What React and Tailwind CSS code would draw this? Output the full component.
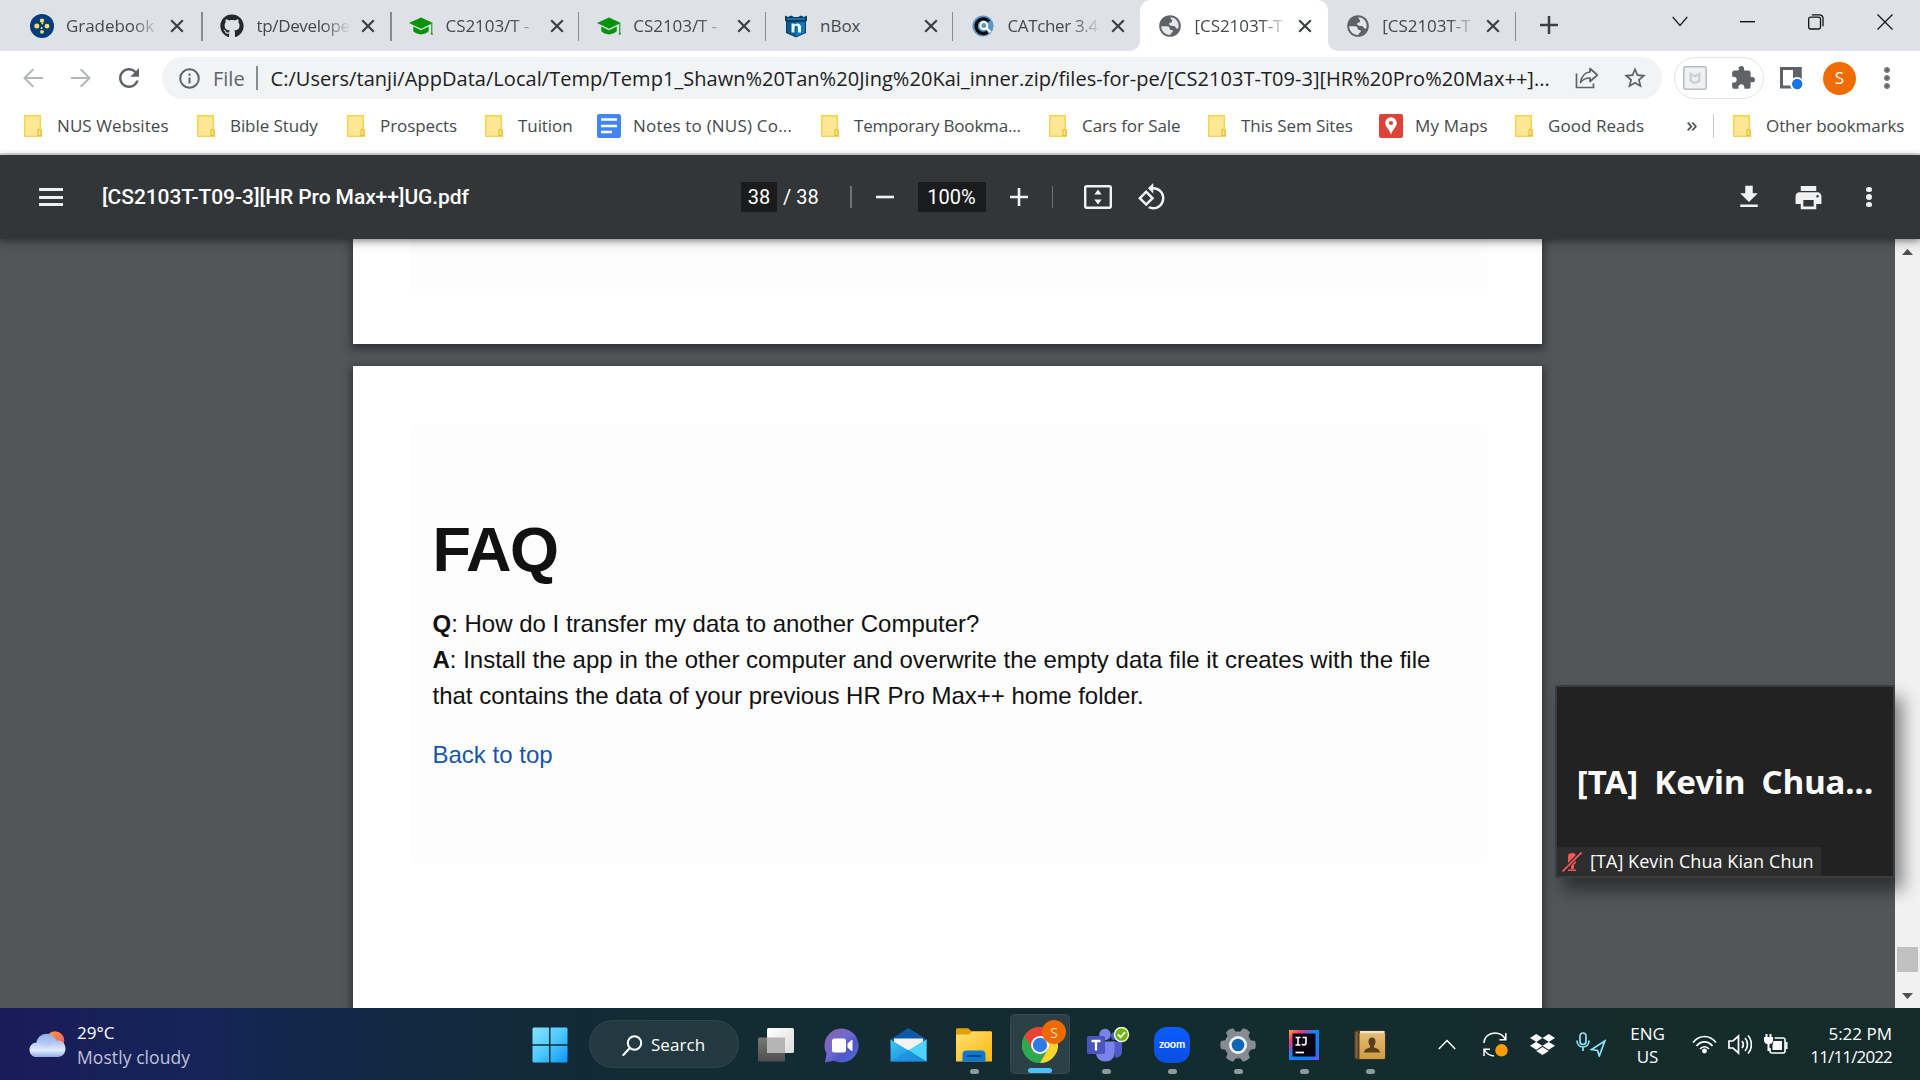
import React from "react";
import { FaGithub, FaDropbox } from "react-icons/fa";
import { MdExtension, MdStarBorder, MdRefresh, MdPrint } from "react-icons/md";

const UI = "font-['Open_Sans','Noto_Sans',sans-serif]";

/* ---------- tab icons ---------- */

const CanvasIcon = () => (
  <svg width="24" height="24" viewBox="0 0 24 24">
    <circle cx="12" cy="12" r="12" fill="#003d7c" />
    <g fill="#ffdc5e">
      <circle cx="12" cy="6.6" r="2.2" />
      <circle cx="12" cy="17.8" r="1.9" />
      <circle cx="6.8" cy="12" r="2.5" />
      <circle cx="17" cy="12.2" r="2.4" />
      <circle cx="12.4" cy="9.6" r="1" />
      <circle cx="11.6" cy="14" r="1" />
    </g>
  </svg>
);

const CapIcon = () => (
  <svg width="24" height="24" viewBox="0 0 24 24" fill="#079307">
    <path d="M12 3.5 0 9l12 5.7L24 9z" />
    <path d="M4.3 12.6v4.6c1.800 1.700 5 2.900 7.700 3.300 2.700-.4 5.900-1.600 7.700-3.300v-4.600L12 16.300z" />
    <path d="M22.300 9.500h1v8.700l.7 2.300h-2.500l.8-2.300z" />
  </svg>
);

const NBoxIcon = () => (
  <svg width="24" height="24" viewBox="0 0 24 24">
    <path d="M1 1.500 4 3l3-1.500L10 3h4l3-1.500L20 3l3-1.500v5l-1 1V19l-10 4.500L2 19V7.500l-1-1z" fill="#0b3c66" />
    <path d="M3 8h18v10.500L12 22.500 3 18.500z" fill="#0a5a92" />
    <path d="M12 8h9v10.500L12 22.500z" fill="#1079b8" />
    <path d="M7.500 18.500V9.500h3v1c2.500-2 6.500-1 6.500 2.500v5.500h-3v-5c0-2.200-3.500-2.200-3.500 0v5z" fill="#e8f6ff" />
    <path d="M3 4.200h18v1.600H3z" fill="#1b82b4" />
  </svg>
);

const CatcherIcon = () => (
  <svg width="24" height="24" viewBox="0 0 24 24" fill="none">
    <circle cx="12" cy="12" r="10.600" fill="#5b97c2" />
    <path d="M16.500 18.200A7.300 7.300 0 1 1 18 7.500" stroke="#0b0b0b" strokeWidth="3.400" />
    <circle cx="12.800" cy="11.500" r="3.500" fill="#5b97c2" stroke="#fff" strokeWidth="2" />
    <path d="m15.500 14 4 4.200" stroke="#fff" strokeWidth="2.200" />
  </svg>
);

const GlobeIcon = () => (
  <svg width="22" height="22" viewBox="0 0 22 22">
    <circle cx="11" cy="11" r="10.800" fill="#5f6368" />
    <g fill="#e4e6ea">
      <path d="M11.500 2.300c3.700.2 6.800 2.700 7.800 6 .5 2 .4 3.600 0 5-1 .8-2.300.5-2.700-.7-.3-1-.8-1.600-2-1.600-1.600 0-3.600-.3-4.300-1.500-.6-1.200.3-2 1.600-2.100 1-.1 1.300-.7 1.200-1.700-.2-1.200-1.700-1.600-1.600-3.400z" />
      <path d="M2.200 11.300H8c1.700 0 2.500.9 2.700 2.200.1 1.200.8 1.500 2 1.600 1.200.2 1.400 1 .9 1.900-.6 1-1.900 1-2.300 2.900-5 .2-9-3.600-9.100-8.600z" />
    </g>
  </svg>
);

const Cross = ({ className = "" }) => (
  <svg className={className} width="14" height="14" viewBox="0 0 14 14" stroke="#3c4043" strokeWidth="2.200">
    <path d="m1.200 1.200 11.600 11.600M12.800 1.200 1.200 12.800" />
  </svg>
);

const tabs = [
  { icon: <CanvasIcon />, title: "Gradebook", fade: true, w: "w-[190.500px]" },
  { icon: <FaGithub size={24} color="#24292f" />, title: "tp/Develope", fade: true, w: "w-[189px]", tight: true },
  { icon: <CapIcon />, title: "CS2103/T -", fade: true, w: "w-[187.800px]" },
  { icon: <CapIcon />, title: "CS2103/T -", fade: true, w: "w-[186.800px]" },
  { icon: <NBoxIcon />, title: "nBox", w: "w-[187.300px]" },
  { icon: <CatcherIcon />, title: "CATcher 3.4", fade: true, w: "w-[187.100px]", tight: true },
  { icon: <GlobeIcon />, title: "[CS2103T-T", fade: true, active: true, w: "w-[187.800px]" },
  { icon: <GlobeIcon />, title: "[CS2103T-T", fade: true, w: "w-[187.800px]" },
];

function Tab({ icon, title, fade, active, w, bare, tight }) {
  return (
    <div className={`relative flex h-[51px] shrink-0 items-center pl-[17px] ${w} ${active ? "z-10 rounded-t-[11px] bg-white" : ""}`}>
      {active && (
        <>
          <svg className="absolute bottom-0 -left-[10px]" width="10" height="10"><path d="M10 0v10H0A10 10 0 0 0 10 0" fill="#fff" /></svg>
          <svg className="absolute -right-[10px] bottom-0" width="10" height="10"><path d="M0 0v10h10A10 10 0 0 1 0 0" fill="#fff" /></svg>
        </>
      )}
      <span className="flex h-6 w-[25px] items-center justify-center">{icon}</span>
      <span
        className={`ml-3 w-[92px] overflow-hidden text-[17px] leading-6 whitespace-nowrap text-[#45494d] ${tight ? "tracking-[-0.350px]" : "tracking-[-0.050px]"} ${
          fade ? "[mask-image:linear-gradient(to_right,#000_72%,transparent_102%)]" : ""
        }`}
      >
        {title}
      </span>
      <Cross className="ml-[12px]" />
      {!active && !bare && <span className="absolute top-3 right-0 h-[29px] w-[1.500px] bg-[#888c91]" />}
    </div>
  );
}

function TabStrip() {
  return (
    <div className="flex h-[51px] bg-[#dee1e6] pl-3">
      {tabs.map((t, i) => (
        <Tab key={i} {...t} bare={i === 5} />
      ))}
      <svg className="mt-4 ml-6" width="18" height="18" viewBox="0 0 18 18" stroke="#3c4043" strokeWidth="2.500">
        <path d="M9 0v18M0 9h18" />
      </svg>
      <svg className="mt-4 ml-auto" width="16" height="11" viewBox="0 0 16 11" fill="none" stroke="#222" strokeWidth="1.300">
        <path d="m.7 1 7.300 8.500L15.300 1" />
      </svg>
      <svg className="mt-[21px] ml-[52px]" width="15" height="2"><path d="M0 .7h15" stroke="#111" strokeWidth="1.400" /></svg>
      <svg className="mt-[14px] ml-[53px]" width="16" height="16" viewBox="0 0 16 16" fill="none" stroke="#111" strokeWidth="1.300">
        <rect x=".7" y="3.200" width="11.800" height="11.800" rx="1.800" />
        <path d="M3.800.8h7.700a3.500 3.500 0 0 1 3.500 3.500v8" />
      </svg>
      <svg className="mt-[14px] mr-[27px] ml-[53px]" width="16" height="16" viewBox="0 0 16 16" stroke="#111" strokeWidth="1.200">
        <path d="m.5.5 15 15M15.500.5l-15 15" />
      </svg>
    </div>
  );
}

/* ---------- address bar ---------- */

const Arrow = ({ className }) => (
  <svg className={className} width="20" height="20" viewBox="0 0 20 20" fill="none" stroke="#b4b7ba" strokeWidth="2">
    <path d="M20 10H1.500M10.300 1.200 1.500 10l8.800 8.800" />
  </svg>
);

function AddressBar() {
  return (
    <div className="flex h-[54px] items-center bg-white pl-[23px]">
      <Arrow className="" />
      <Arrow className="ml-7 rotate-180" />
      <MdRefresh size={30} color="#5f6368" className="ml-[23px]" />
      <div className="ml-[18px] flex h-[42px] w-[1500px] items-center rounded-full bg-[#f1f3f4] pl-[17px]">
        <svg width="21" height="21" viewBox="0 0 21 21" fill="none" stroke="#5f6368" strokeWidth="2">
          <circle cx="10.500" cy="10.500" r="9.300" />
          <path d="M10.500 9.500v6M10.500 5.400v2.300" />
        </svg>
        <span className="ml-[13px] w-[43px] pt-px text-[20px] text-[#5f6368]">File</span>
        <span className="h-6 w-[1.500px] bg-[#888c91]" />
        <span className="ml-[13px] flex-1 pt-px text-[20px] tracking-[0.045px] whitespace-nowrap text-[#202124]">
          C:/Users/tanji/AppData/Local/Temp/Temp1_Shawn%20Tan%20Jing%20Kai_inner.zip/files-for-pe/[CS2103T-T09-3][HR%20Pro%20Max++]...
        </span>
        <svg className="mr-[23px]" width="24" height="22" viewBox="0 0 24 22" fill="none" stroke="#5f6368" strokeWidth="1.700">
          <path d="M1.500 6.500v14h17v-4" />
          <path d="M15 1.500 22.300 8 15 14.500V11c-4 0-7 1-9.500 4.500C6.500 9.500 9.500 5.500 15 5z" strokeLinejoin="round" />
        </svg>
        <MdStarBorder size={26} color="#5f6368" className="mr-[14px]" />
      </div>
      <div className="ml-3 flex h-[42px] w-[90px] items-center rounded-full border-[1.500px] border-[#e1e3e6] pl-[8px]">
        <svg width="24" height="24" viewBox="0 0 24 24" fill="none">
          <rect x=".8" y=".8" width="22.400" height="22.400" rx="2" fill="#f0f1f3" stroke="#b7bcc1" strokeWidth="1.500" />
          <path d="m6.500 6 5.500 3 5.500-3v9.500L12 18.500l-5.500-3z" fill="#cdd1d5" />
          <path d="m9 10 3 1.700L15 10v4l-3 1.700L9 14z" fill="#f0f1f3" />
        </svg>
        <MdExtension size={26} color="#5f6368" className="ml-[23px]" />
      </div>
      <svg className="ml-4" width="23" height="23" viewBox="0 0 23 23">
        <path d="M1.500 1.500h18.800v18.500H1.500z" fill="none" stroke="#5f6368" strokeWidth="3" />
        <path d="M13 1h8v12h-8z" fill="#5f6368" />
        <circle cx="17" cy="17" r="7" fill="#fff" />
        <circle cx="17.200" cy="17" r="5.200" fill="#1a73e8" />
      </svg>
      <span className="ml-5 flex h-[33px] w-[33px] items-center justify-center rounded-full bg-[#ef6c00] text-[17px] text-white">S</span>
      <div className="ml-[29px] flex flex-col gap-1">
        {[0, 1, 2].map((i) => (
          <span key={i} className="h-1 w-1 rounded-full bg-[#5f6368] outline-[0.500px] outline-[#5f6368]" />
        ))}
      </div>
    </div>
  );
}

/* ---------- bookmarks ---------- */

const Folder = () => (
  <svg width="18" height="22" viewBox="0 0 18 22">
    <path d="M.7.7h15.600v14l1 .5v6.100H.7z" fill="#ffe793" stroke="#f8d351" strokeWidth="1.400" />
    <path d="M14 20.500v-4.600a1.500 1.500 0 0 1 3 0v4.600z" fill="#ffe793" stroke="#e9bd33" strokeWidth="1.200" />
  </svg>
);
const Docs = () => (
  <svg width="24" height="24" viewBox="0 0 24 24">
    <rect width="24" height="24" rx="2.500" fill="#4285f4" />
    <path d="M4 5.500h16M4 12h16M4 18h11" stroke="#fff" strokeWidth="2.600" />
  </svg>
);
const Maps = () => (
  <svg width="24" height="24" viewBox="0 0 24 24">
    <rect width="24" height="24" rx="2" fill="#db4437" />
    <path d="M12 3.300a5.800 5.800 0 0 0-5.800 5.800c0 4.200 4.800 6.500 5.800 12 1-5.500 5.800-7.800 5.800-12A5.800 5.800 0 0 0 12 3.300z" fill="#fff" />
    <circle cx="12" cy="9" r="2.100" fill="#db4437" />
  </svg>
);

const bookmarks = [
  { label: "NUS Websites", w: "w-[173px]", track: "tracking-[0.080px]" },
  { label: "Bible Study", w: "w-[150px]" },
  { label: "Prospects", w: "w-[138px]" },
  { label: "Tuition", w: "w-[112px]" },
  { label: "Notes to (NUS) Co...", w: "w-[224px]", icon: <Docs />, track: "tracking-[0.200px]" },
  { label: "Temporary Bookma...", w: "w-[228px]", track: "tracking-[-0.200px]" },
  { label: "Cars for Sale", w: "w-[159px]" },
  { label: "This Sem Sites", w: "w-[171px]" },
  { label: "My Maps", w: "w-[136px]", icon: <Maps />, track: "tracking-[0.200px]" },
  { label: "Good Reads", w: "w-[172px]", track: "tracking-[0.050px]" },
];

const Bookmark = ({ label, icon, w = "", track = "tracking-[-0.080px]" }) => (
  <div className={`flex shrink-0 items-center text-[17px] whitespace-nowrap text-[#45494d] ${w} ${track} ${icon ? "gap-3" : "gap-[15px]"}`}>
    {icon || <Folder />}
    <span>{label}</span>
  </div>
);

function BookmarksBar() {
  return (
    <div className="flex h-[50px] items-center border-b-2 border-[#dadce0] bg-white pb-[6px] pl-6">
      {bookmarks.map((b) => (
        <Bookmark key={b.label} {...b} />
      ))}
      <svg width="10" height="9" viewBox="0 0 10 9" fill="none" stroke="#4a4e52" strokeWidth="1.700">
        <path d="m.7.700 3.600 3.800L.7 8.300M5.300.7l3.600 3.800-3.600 3.800" />
      </svg>
      <span className="mr-[19px] ml-[16px] h-6 w-px bg-[#c6c9cd]" />
      <Bookmark label="Other bookmarks" />
    </div>
  );
}

/* ---------- PDF viewer ---------- */

const Divider = ({ className }) => <span className={`h-[22px] w-[1.500px] bg-[#6f7275] ${className}`} />;

function PdfToolbar() {
  return (
    <div className="relative z-10 flex h-[84px] items-center bg-[#323639] pl-[39px] font-[Roboto,sans-serif] text-[#f1f1f1] shadow-[0_2px_6px_rgba(0,0,0,0.35),0_3px_12px_rgba(0,0,0,0.18)]">
      <div className="flex flex-col gap-[4.500px]">
        <span className="h-[3px] w-6 bg-[#f1f1f1]" />
        <span className="h-[3px] w-6 bg-[#f1f1f1]" />
        <span className="h-[3px] w-6 bg-[#f1f1f1]" />
      </div>
      <span className="ml-[39px] w-[639px] pt-px text-[21px] font-medium tracking-[-0.080px] text-white">[CS2103T-T09-3][HR Pro Max++]UG.pdf</span>
      <span className="flex h-[30px] w-9 items-center justify-center bg-[#191b1c] text-[20px] text-white">38</span>
      <span className="ml-[6px] w-[67px] text-[20px] whitespace-pre text-white">{"/ 38"}</span>
      <Divider className="" />
      <svg className="ml-6" width="18" height="18"><path d="M0 9h18" stroke="#f1f1f1" strokeWidth="2.600" /></svg>
      <span className="ml-6 flex h-[30px] w-[68px] items-center justify-center bg-[#191b1c] text-[20px] text-white">100%</span>
      <svg className="ml-6" width="18" height="18"><path d="M0 9h18M9 0v18" stroke="#f1f1f1" strokeWidth="2.600" /></svg>
      <Divider className="ml-6" />
      <svg className="ml-[31px]" width="28" height="24" viewBox="0 0 28 24">
        <rect x="1.200" y="1.200" width="25.600" height="21.600" rx="1.500" fill="none" stroke="#f1f1f1" strokeWidth="2.400" />
        <path d="m14 4.500 3.700 5H10.300zM14 19.500l3.700-5H10.300z" fill="#f1f1f1" />
      </svg>
      <svg className="ml-[25px]" width="30" height="30" viewBox="0 0 24 24" fill="#f1f1f1">
        <path d="M7.340 6.410.860 12.900l6.490 6.480 6.490-6.480-6.500-6.490zM3.690 12.900l3.660-3.660L11 12.900l-3.660 3.660-3.650-3.660zm15.670-6.260C17.610 4.880 15.300 4 13 4V.760L8.760 5 13 9.240V6c1.790 0 3.580.680 4.950 2.050 2.730 2.730 2.730 7.170 0 9.900C16.580 19.320 14.790 20 13 20c-.970 0-1.940-.210-2.840-.610l-1.490 1.490C10.020 21.620 11.510 22 13 22c2.300 0 4.610-.880 6.360-2.640 3.520-3.510 3.520-9.210 0-12.720z" />
      </svg>
      <svg className="ml-auto" width="30" height="30" viewBox="0 0 24 24" fill="#f1f1f1">
        <path d="M19 9h-4V3H9v6H5l7 7 7-7zM5 18v2h14v-2H5z" />
      </svg>
      <MdPrint size={31} className="ml-[29px]" />
      <div className="mr-[48.500px] ml-[42px] flex flex-col gap-[2px]">
        {[0, 1, 2].map((i) => (
          <span key={i} className="h-[5.500px] w-[5.500px] rounded-full bg-[#f1f1f1]" />
        ))}
      </div>
    </div>
  );
}

function Document() {
  return (
    <div className="flex flex-1 flex-col items-center gap-[22px] overflow-hidden bg-[#525659]">
      <div className="h-[105px] w-[1189px] shrink-0 bg-white pr-[55px] pl-[57px] shadow-[0_3px_8px_2px_rgba(20,20,25,0.55)]">
        <div className="h-[50px] bg-[#fdfdfd]" />
      </div>
      <div className="h-[700px] w-[1189px] shrink-0 bg-white pt-[59px] pr-[55px] pl-[57px] shadow-[0_3px_8px_2px_rgba(20,20,25,0.55)]">
        <div className="h-[438px] bg-[#fdfdfd] pt-[87px] pl-[22.500px] font-['Liberation_Sans',Arial,sans-serif] text-[24px] leading-9 text-[#111]">
          <h1 className="text-[63px] leading-[74px] font-bold tracking-[-1.500px]">FAQ</h1>
          <p className="mt-[20px] whitespace-nowrap">
            <b>Q</b>: How do I transfer my data to another Computer?
            <br />
            <b>A</b>: Install the app in the other computer and overwrite the empty data file it creates with the file
            <br />
            that contains the data of your previous HR Pro Max++ home folder.
          </p>
          <p className="mt-[23px] text-[#1756a9]">Back to top</p>
        </div>
      </div>
    </div>
  );
}

function Scrollbar() {
  return (
    <div className="flex w-[25px] flex-col items-center bg-[#f1f1f1] pt-[10px] pb-[9px]">
      <svg width="11" height="6"><path d="m5.500 0 5.500 6H0z" fill="#505050" /></svg>
      <span className="mt-auto mb-[21px] h-[25px] w-[21px] bg-[#c1c1c1]" />
      <svg width="11" height="6"><path d="M5.500 6 0 0h11z" fill="#505050" /></svg>
    </div>
  );
}

function CallWindow() {
  return (
    <div className="absolute top-[685px] left-[1555px] z-20 flex h-[193px] w-[340px] flex-col border-2 border-[#3a3e41] bg-[#222] shadow-[8px_12px_16px_rgba(0,0,0,0.45)]">
      <div className="flex flex-1 items-end justify-center pb-[43px] font-['Noto_Sans',sans-serif] text-[33px] leading-[44px] font-bold whitespace-nowrap text-[#fafafa] [word-spacing:7.500px]">
        [TA] Kevin Chua...
      </div>
      <div className="flex h-[29px] w-[264px] items-center bg-[#2d2d2d] pl-[5px]">
        <svg width="20" height="20" viewBox="0 0 20 20" fill="none">
          <rect x="6" y="1" width="8" height="12" rx="3.800" fill="#fb5656" />
          <path d="M9 13h3v4H9zM6 17.500h8V19H6z" fill="#fb5656" />
          <path d="M3 16.800 17.800 2" stroke="#2d2d2d" strokeWidth="4" />
          <path d="M.5 19.500 19.500.5" stroke="#fb5656" strokeWidth="1.800" />
        </svg>
        <span className="ml-[8px] text-[18px] tracking-[0.070px] whitespace-nowrap text-white">[TA] Kevin Chua Kian Chun</span>
      </div>
    </div>
  );
}

/* ---------- taskbar ---------- */

const WeatherIcon = () => (
  <svg width="37" height="26" viewBox="0 0 37 26">
    <defs>
      <linearGradient id="sun" x1="0" y1="0" x2="1" y2="1"><stop stopColor="#ff9f3a" /><stop offset="1" stopColor="#ff4f6e" /></linearGradient>
      <linearGradient id="cloudA" x1="0" y1="0" x2="0" y2="1"><stop stopColor="#8fb0f0" /><stop offset="1" stopColor="#dbe6fb" /></linearGradient>
      <linearGradient id="cloudB" x1="0" y1="0" x2="0" y2="1"><stop stopColor="#a9c1ee" /><stop offset=".6" stopColor="#e2ebfc" /><stop offset="1" stopColor="#8cabea" /></linearGradient>
    </defs>
    <circle cx="26" cy="9.500" r="9.300" fill="url(#sun)" />
    <circle cx="17.500" cy="13" r="10.300" fill="url(#cloudA)" />
    <path d="M7.500 11.500c3 0 5 1.400 6.500 3.500 1.500 1 3.500 1 7 .5 1-4 4-6 8-6 4.500 0 7.500 3.600 7.500 8 0 5-3.500 8.500-8 8.500h-21C3 26 .5 22.500.5 18.700s3-7.200 7-7.200z" fill="url(#cloudB)" />
  </svg>
);

const WindowsIcon = () => (
  <svg width="36" height="36" viewBox="0 0 36 36">
    <defs><linearGradient id="win" gradientUnits="userSpaceOnUse" x1="0" y1="0" x2="36" y2="36"><stop stopColor="#8be2ff" /><stop offset=".5" stopColor="#4ccaff" /><stop offset="1" stopColor="#0b93fb" /></linearGradient></defs>
    <path d="M1.500.5H17v16.700H.5V1.500zM18.500.5h16l1 1v15.700h-17zM.5 18.800H17v16.700H1.500l-1-1zM18.500 18.800h17v15.700l-1 1h-16z" fill="url(#win)" />
  </svg>
);

const TaskViewIcon = () => (
  <svg width="36" height="34" viewBox="0 0 36 34">
    <defs>
      <linearGradient id="tvA" x1="0" y1="0" x2="1" y2="1"><stop stopColor="#fff" /><stop offset="1" stopColor="#dcdcdc" /></linearGradient>
      <linearGradient id="tvB" x1="0" y1="0" x2="0" y2="1"><stop stopColor="#777" /><stop offset="1" stopColor="#4e4e4e" /></linearGradient>
    </defs>
    <rect y="9.500" width="27" height="24" rx="1.500" fill="url(#tvB)" />
    <rect x="9" width="27" height="25" rx="1.500" fill="url(#tvA)" />
    <path d="M9 9.500h18V25H10.500L9 23.500z" fill="#b5b5b5" />
  </svg>
);

const ChatIcon = () => (
  <svg className="mr-[2px]" width="35" height="35" viewBox="0 0 35 35">
    <defs><linearGradient id="chat" x1="0" y1="0" x2="1" y2="1"><stop stopColor="#8e62a8" /><stop offset=".45" stopColor="#6f6ad0" /><stop offset=".65" stopColor="#5157c9" /><stop offset="1" stopColor="#4a6bdc" /></linearGradient></defs>
    <path d="M17.500.5a17 17 0 1 1-7.300 32.300L1 34.500l1.600-8.800A17 17 0 0 1 17.500.5z" fill="url(#chat)" />
    <rect x="8" y="10.500" width="14" height="14" rx="2.500" fill="#fff" />
    <path d="m23.500 15.500 4-3.500c.5-.3 1 0 1 .5v10c0 .5-.5.800-1 .5l-4-3.500z" fill="#fff" />
  </svg>
);

const MailIcon = () => (
  <svg width="37" height="34" viewBox="0 0 37 34">
    <defs><linearGradient id="mail" x1="0" y1="0" x2="1" y2="1"><stop stopColor="#3cc6f7" /><stop offset="1" stopColor="#1580d8" /></linearGradient></defs>
    <path d="M.5 11.500 18.500 0l18 11.500v5H.5z" fill="#0c5ba8" />
    <path d="M4 10.500h29V22H4z" fill="#f3f3f3" />
    <path d="M.5 11.500v22h36v-22l-18 11z" fill="url(#mail)" />
    <path d="M18.500 22.500 36.500 11.500v22z" fill="#4fd2fb" />
    <path d="M.5 33.500h36L18.500 22z" fill="#1c8ee0" opacity=".6" />
  </svg>
);

const ExplorerIcon = () => (
  <svg width="36" height="34" viewBox="0 0 36 34">
    <defs><linearGradient id="fold" x1="0" y1="0" x2="1" y2="1"><stop stopColor="#ffdf76" /><stop offset="1" stopColor="#fdb90c" /></linearGradient></defs>
    <path d="M0 2C0 .8.600.2 1.500.2H12l3.500 3H34.500c1 0 1.500.6 1.500 1.500V12H0z" fill="#e2a107" />
    <path d="M0 6.500h13l3-3h18.500c1 0 1.500.6 1.500 1.500v28.500H0z" fill="url(#fold)" />
    <path d="M6.500 33.500v-7a4 4 0 0 1 4-4h15a4 4 0 0 1 4 4v7z" fill="#0d78d2" />
    <path d="M11 28h14" stroke="#083f73" strokeWidth="1.700" />
  </svg>
);

const ChromeIcon = () => (
  <svg width="36" height="36" viewBox="0 0 36 36">
    <circle cx="18" cy="18" r="18" fill="#2da94f" />
    <path d="M2.400 9A18 18 0 0 1 33.600 9H18z" fill="#ea4335" />
    <path d="M2.400 9 10.200 22.500 18 18V9z" fill="#ea4335" />
    <path d="M33.600 9A18 18 0 0 1 18 36l7.800-13.500L18 9z" fill="#fdd32f" />
    <path d="M2.400 9 10.200 22.500 18 36A18 18 0 0 1 2.400 9z" fill="#2da94f" />
    <circle cx="18" cy="18" r="9" fill="#fff" />
    <circle cx="18" cy="18" r="7.200" fill="#3079ea" />
  </svg>
);

const TeamsIcon = () => (
  <svg className="ml-[4px] shrink-0" width="44" height="36" viewBox="0 0 44 36">
    <circle cx="29" cy="9" r="4" fill="#5059c9" />
    <circle cx="19" cy="7.500" r="5.700" fill="#7b83eb" />
    <path d="M26 14.500h10v10c0 4-3 6.500-7 6z" fill="#5059c9" />
    <path d="M10 14.500h18.500v11c0 6-4 9-9 9s-9.500-3-9.500-9z" fill="#7b83eb" />
    <rect x="1" y="9" width="18" height="18" rx="1.500" fill="#4b53bc" />
    <path d="M5.500 14h9M10 14v9.500" stroke="#fff" strokeWidth="2.300" />
    <circle cx="35.500" cy="7.500" r="7.700" fill="#fff" />
    <circle cx="35.500" cy="7.500" r="6.300" fill="#6bb700" />
    <path d="m32 7.500 2.600 2.700 4.600-5" fill="none" stroke="#fff" strokeWidth="1.900" />
  </svg>
);

const ZoomIcon = () => (
  <div className="flex h-9 w-9 items-center justify-center rounded-[13px] bg-gradient-to-b from-[#0b5cff] to-[#0a4fe0] pb-px font-[Lato,sans-serif] text-[11px] font-bold tracking-[-0.200px] text-white">
    zoom
  </div>
);

const GearIcon = () => (
  <svg width="36" height="36" viewBox="-18 -18 36 36">
    <defs><linearGradient id="gear" x1="0" y1="0" x2="1" y2="1"><stop stopColor="#9aa0a6" /><stop offset="1" stopColor="#6d7277" /></linearGradient></defs>
    <circle r="13.500" fill="url(#gear)" />
    {[30, 90, 150, 210, 270, 330].map((a) => (
      <path key={a} d="M-5-11-4-17Q0-18.500 4-17L5-11 5-9H-5z" fill="#868c92" transform={`rotate(${a})`} />
    ))}
    <circle r="11" fill="#868c92" />
    <circle r="9" fill="#f2f2f2" />
    <circle r="6.300" fill="#0f66b5" />
  </svg>
);

const IdeaIcon = () => (
  <svg width="30" height="30" viewBox="0 0 30 30">
    <defs><linearGradient id="idea" x1="0" y1="0" x2="1" y2="1"><stop stopColor="#fda53b" /><stop offset=".22" stopColor="#f2317c" /><stop offset=".45" stopColor="#1486ff" /><stop offset=".8" stopColor="#147bfa" /><stop offset="1" stopColor="#8a4bff" /></linearGradient></defs>
    <path d="M0 0h30v30H0z" fill="url(#idea)" />
    <path d="M3.500 3.500h23v23h-23z" fill="#0a0310" />
    <path d="M6.500 7.500h5M6.500 15h5M9 7.500V15M13.500 7.500H17v5.300c0 1.500-.8 2.200-2 2.200-.9 0-1.500-.3-2-1" fill="none" stroke="#fff" strokeWidth="1.600" />
    <path d="M6.500 22.500H15" stroke="#fff" strokeWidth="1.700" />
  </svg>
);

const AddressBookIcon = () => (
  <svg width="32" height="30" viewBox="0 0 32 30">
    <defs><linearGradient id="book" x1="0" y1="0" x2="0" y2="1"><stop stopColor="#e3bb74" /><stop offset="1" stopColor="#cf9b43" /></linearGradient></defs>
    <rect x=".5" y=".5" width="31" height="29" rx="2" fill="#5a4122" />
    <path d="M6 1h24.500v3H6z" fill="#efe4cf" />
    <path d="M5.500 3.200h25.500V28a1 1 0 0 1-1 1H5.500z" fill="url(#book)" />
    <path d="M2.500 2v26" stroke="#83683f" strokeWidth="2" />
    <path d="M18 7.500c2.300 0 3.500 1.700 3.500 4s-.9 3.500-1.500 4.300v1.700c2.500 1 5.500 1.300 6 5H10c.5-3.700 3.500-4 6-5v-1.700c-.6-.8-1.500-2-1.500-4.300s1.200-4 3.500-4z" fill="#5a3f18" />
  </svg>
);

const TaskItem = ({ children, running, active }) => (
  <div className={`relative mx-[3px] flex h-[60px] w-[60px] shrink-0 items-center justify-center rounded-[5px] pt-[2px] ${active ? "bg-white/10 ring-1 ring-white/5 ring-inset" : ""}`}>
    {children}
    {running && <span className="absolute bottom-0 left-[25.500px] h-[5px] w-[9px] rounded-full bg-[#8f9b9b]" />}
    {active && <span className="absolute bottom-px left-[18px] h-[5px] w-6 rounded-full bg-[#4cc2ff]" />}
  </div>
);

function Taskbar() {
  return (
    <div className="flex h-[72px] items-center bg-[linear-gradient(90deg,#1a1b58_0px,#15245a_190px,#12274a_300px,#12283f_430px,#122a33_620px,#132b31_900px,#132c2e_1300px,#152b2a_1920px)] pl-[29px] text-white">
      <WeatherIcon />
      <div className="ml-[11px] w-[440px] pt-[2px] text-[17px] leading-6">
        <div>29°C</div>
        <div className="text-[17.500px] tracking-[0.080px] text-[#c1c2d8]">Mostly cloudy</div>
      </div>
      <div className="flex h-[60px] w-[66px] items-center justify-center pt-[2px]">
        <WindowsIcon />
      </div>
      <div className="mr-1 ml-[6px] flex h-12 w-[150px] shrink-0 items-center rounded-full bg-white/[0.070] pt-[2px] pl-[33px] ring-1 ring-white/5 ring-inset">
        <svg width="21" height="21" viewBox="0 0 21 21" fill="none" stroke="#fff" strokeWidth="2">
          <circle cx="12.500" cy="8" r="6.700" />
          <path d="m7.800 13-6.500 7" strokeLinecap="round" />
        </svg>
        <span className="ml-2 text-[17px] tracking-[0.050px]">Search</span>
      </div>
      <TaskItem><TaskViewIcon /></TaskItem>
      <TaskItem><ChatIcon /></TaskItem>
      <TaskItem><MailIcon /></TaskItem>
      <TaskItem running><ExplorerIcon /></TaskItem>
      <TaskItem active>
        <ChromeIcon />
        <span className="absolute top-[6px] right-[4px] flex h-6 w-6 items-center justify-center rounded-full bg-[#ee6a00] text-[14px] text-[#ffd9b8]">S</span>
      </TaskItem>
      <TaskItem running><TeamsIcon /></TaskItem>
      <TaskItem running><ZoomIcon /></TaskItem>
      <TaskItem running><GearIcon /></TaskItem>
      <TaskItem running><IdeaIcon /></TaskItem>
      <TaskItem running><AddressBookIcon /></TaskItem>

      <svg className="ml-auto" width="18" height="11" viewBox="0 0 18 11" fill="none" stroke="#fff" strokeWidth="1.500"><path d="m.8 10 8.200-8.500L17.200 10" /></svg>
      <svg className="ml-[27px]" width="25" height="25" viewBox="0 0 25 25" fill="none" stroke="#fff" strokeWidth="1.500">
        <path d="M1 11C1 5 6 1 12 1c4.500 0 8.500 2.500 10.500 6.500M22.800 1v6.800h-6.300M1 24v-6.700h6M1.500 18c2 3.500 5 5.500 9.500 6" />
        <circle cx="18.500" cy="18.300" r="6.200" fill="#ff9a0a" stroke="none" />
      </svg>
      <FaDropbox size={25} className="ml-[22px]" />
      <svg className="ml-[21px]" width="30" height="25" viewBox="0 0 30 25" fill="none" stroke="#8fe0f8" strokeWidth="1.700">
        <rect x="4" y="1" width="6" height="11.500" rx="3" />
        <path d="M1 8.500c0 4 2.500 6.500 6 6.500s6-2.500 6-6.500M7 15v4M28.800 9 15.500 17.500l6 1 1.800 5.500z" />
      </svg>
      <div className="ml-[17px] w-[49px] pt-[2px] text-center text-[17px] leading-[23px] tracking-[-0.100px]">
        <div>ENG</div>
        <div>US</div>
      </div>
      <svg className="ml-[20px]" width="25" height="19" viewBox="0 0 25 19" fill="none" stroke="#fff" strokeWidth="1.700">
        <path d="M1 7.500C7.500-.5 17.500-.5 24 7.500M4.500 11c4.500-5.500 11.500-5.500 16 0M8 14c2.500-3 6.500-3 9 0" />
        <circle cx="12.500" cy="16" r="2.400" fill="#fff" stroke="none" />
      </svg>
      <svg className="ml-[11px]" width="24" height="21" viewBox="0 0 24 21" fill="none" stroke="#fff" strokeWidth="1.700">
        <path d="M1 7h4l5.500-5v17L5 14H1zM14 7c1.500 2 1.500 5 0 7M17 4c3.300 3.500 3.300 9.500 0 13M20 1.500c4.500 5 4.500 13 0 18" />
      </svg>
      <svg className="ml-[12px]" width="24" height="21" viewBox="0 0 24 21" fill="none" stroke="#fff" strokeWidth="1.600">
        <path d="M10.500 4H19a2 2 0 0 1 2 2v11a2 2 0 0 1-2 2H8a2 2 0 0 1-2-2v-3" />
        <path d="M9.500 7H18v9H8.500v-5z" fill="#fff" stroke="none" />
        <path d="M22.500 8v7M2.500 0v3M6.500 0v3" strokeWidth="2" />
        <path d="M0 3h9v3.500C9 9 7 10 5.500 10v7h-2v-7C2 10 0 9 0 6.500z" fill="#fff" stroke="none" />
      </svg>
      <div className="mr-[28px] ml-[22px] w-[82px] pt-px text-right text-[17px] leading-[23px] whitespace-nowrap">
        <div>5:22 PM</div>
        <div className="tracking-[-0.850px]">11/11/2022</div>
      </div>
    </div>
  );
}

export default function App() {
  return (
    <div className={`relative flex h-[1080px] w-[1920px] flex-col overflow-hidden ${UI}`}>
      <TabStrip />
      <AddressBar />
      <BookmarksBar />
      <PdfToolbar />
      <div className="flex min-h-0 flex-1">
        <Document />
        <Scrollbar />
      </div>
      <CallWindow />
      <Taskbar />
    </div>
  );
}
